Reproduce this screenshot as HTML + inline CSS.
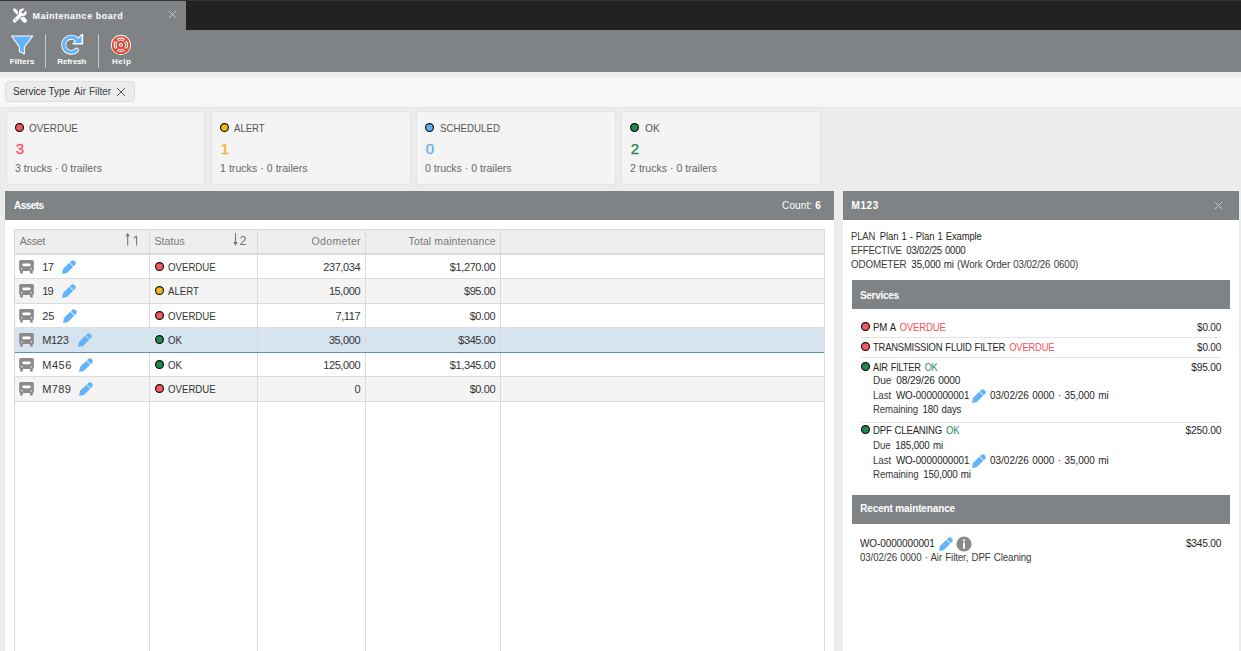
<!DOCTYPE html>
<html><head><meta charset="utf-8">
<style>
*{box-sizing:border-box;margin:0;padding:0}
html,body{width:1241px;height:651px;overflow:hidden;background:#ececec;font-family:"Liberation Sans",sans-serif;color:#333;position:relative}
.b{position:absolute}
.t{position:absolute;line-height:0;white-space:nowrap}
.v{color:#1e1e1e;margin-left:1.5px}
.dot{position:absolute;width:9px;height:9px;border-radius:50%;border:1.3px solid #151515;box-shadow:0 0 0 1px rgba(255,255,255,.9)}
.red{background:#f55a5f}.yel{background:#f7b90f}.blu{background:#5eaef5}.grn{background:#1e8a52}
</style></head><body>
<svg width="0" height="0" style="position:absolute">
<defs>
<symbol id="truck" viewBox="0 0 15 15">
<rect x="0.15" y="0.9" width="14.7" height="11.2" rx="1.6" fill="#8a8a8a"/>
<rect x="3.5" y="4.4" width="8" height="2.8" rx="0.9" fill="#fff"/>
<circle cx="2.8" cy="9.8" r="1" fill="#c4c4c4"/><circle cx="12.2" cy="9.8" r="1" fill="#c4c4c4"/>
<rect x="1.1" y="11.5" width="2.7" height="3" fill="#8a8a8a"/><rect x="11" y="11.5" width="2.7" height="3" fill="#8a8a8a"/>
</symbol>
<symbol id="pen" viewBox="0 0 15 15">
<g transform="translate(0.1 14.9) rotate(-45)" fill="#62b3fb">
<path d="M0 0 L4 -2.8 L12.9 -2.8 L12.9 2.8 L4 2.8 Z"/>
<path d="M13.7 -2.8 L15.2 -2.8 A2.8 2.8 0 0 1 15.2 2.8 L13.7 2.8 Z"/>
</g>
</symbol>
</defs></svg>
<div class="b" style="left:0px;top:0px;width:1241px;height:30px;background:#222;"></div>
<div class="b" style="left:0px;top:0px;width:1241px;height:1px;background:#333;"></div>
<div class="b" style="left:0px;top:1px;width:186px;height:29px;background:#808386;"></div>
<svg class="b" style="left:10px;top:5px" width="20" height="20" viewBox="0 0 20 20">
<g transform="translate(10 10) scale(0.9) translate(-10.2 -10)">
<g stroke="#fff" stroke-linecap="round" fill="none">
<path d="M4.2 4.4 L10 10.4" stroke-width="3.4"/>
<path d="M11 11.6 L15.6 16.4" stroke-width="4.6"/>
</g>
<path d="M4.3 16.4 L11.3 9.2" stroke="#808386" stroke-width="5.6" stroke-linecap="round"/>
<circle cx="13.3" cy="6.9" r="5" fill="#808386"/>
<path d="M4.3 16.4 L11.3 9.2" stroke="#fff" stroke-width="4.1" stroke-linecap="round"/>
<circle cx="13.3" cy="6.9" r="4.2" fill="#fff"/>
<path d="M13.3 6.9 L17.9 2.3" stroke="#808386" stroke-width="2.6" stroke-linecap="butt"/>
<circle cx="13.3" cy="6.9" r="1.3" fill="#808386"/>
<circle cx="5.6" cy="15.2" r="0.7" fill="#808386"/>
</g>
</svg>
<div id="t1" class="t" style="top:15.58px;font-size:9px;color:#fff;font-weight:bold;letter-spacing:0.512px;left:32.5px;">Maintenance board</div>
<svg class="b" style="left:168px;top:10px" width="9" height="9" viewBox="0 0 9 9"><path d="M1 1L8 8M8 1L1 8" stroke="#c4c6c8" stroke-width="1"/></svg>
<div class="b" style="left:0px;top:30px;width:1241px;height:42px;background:#808386;"></div>
<svg class="b" style="left:0;top:30px" width="140" height="42" viewBox="0 30 140 42">
<path d="M11.6 36 L32.8 36 L24.4 47 L24.4 54 L19.4 51.4 L19.4 47 Z" fill="#62b3fb" stroke="#fff" stroke-width="1.1" stroke-linejoin="round"/>
<path d="M76.6 39.4 A7.6 7.6 0 1 0 76.6 50.2" fill="none" stroke="#fff" stroke-width="5" stroke-linecap="round"/>
<path d="M73.4 43.6 L82.2 43.6 L82.2 34.8 Z" fill="#fff" stroke="#fff" stroke-width="2" stroke-linejoin="round"/>
<path d="M76.6 39.4 A7.6 7.6 0 1 0 76.6 50.2" fill="none" stroke="#62b3fb" stroke-width="3.3" stroke-linecap="round"/>
<path d="M74.2 43 L81.6 43 L81.6 35.6 Z" fill="#62b3fb"/>
<circle cx="120.9" cy="44.9" r="10.1" fill="#fff"/>
<circle cx="120.9" cy="44.9" r="9.2" fill="#e6432d"/>
<path d="M117.63 40.23 A5.7 5.7 0 0 1 124.17 40.23 M125.57 41.63 A5.7 5.7 0 0 1 125.57 48.17 M124.17 49.57 A5.7 5.7 0 0 1 117.63 49.57 M116.23 48.17 A5.7 5.7 0 0 1 116.23 41.63" fill="none" stroke="#fff" stroke-width="2.9"/>
<path d="M118.05 39.96 A5.7 5.7 0 0 1 123.75 39.96 M125.84 42.05 A5.7 5.7 0 0 1 125.84 47.75 M123.75 49.84 A5.7 5.7 0 0 1 118.05 49.84 M115.96 47.75 A5.7 5.7 0 0 1 115.96 42.05" fill="none" stroke="#8f9194" stroke-width="1.4"/>
<circle cx="120.9" cy="44.9" r="1.6" fill="#8f9194" stroke="#fff" stroke-width="1"/>
</svg>
<div id="t2" class="t" style="top:62.23px;font-size:8px;color:#fff;font-weight:bold;letter-spacing:0.077px;left:-27.861px;width:100px;text-align:center;">Filters</div>
<div class="b" style="left:45px;top:34px;width:1px;height:34px;background:#c8c9ca;"></div>
<div id="t3" class="t" style="top:62.23px;font-size:8px;color:#fff;font-weight:bold;letter-spacing:-0.094px;left:21.853px;width:100px;text-align:center;">Refresh</div>
<div class="b" style="left:98px;top:34px;width:1px;height:34px;background:#c8c9ca;"></div>
<div id="t4" class="t" style="top:62.23px;font-size:8px;color:#fff;font-weight:bold;letter-spacing:0.539px;left:71.669px;width:100px;text-align:center;">Help</div>
<div class="b" style="left:0px;top:72px;width:1241px;height:5px;background:#ececec;"></div>
<div class="b" style="left:0px;top:77px;width:1241px;height:30px;background:#f6f7f9;"></div>
<div class="b" style="left:0px;top:107px;width:1241px;height:1px;background:#e4e5e7;"></div>
<div class="b" style="left:5px;top:81px;width:130px;height:21px;background:#ececec;border:1px solid #dedede;border-radius:4px"></div>
<div id="t5" class="t" style="top:91.53px;font-size:10px;color:#333;letter-spacing:-0.053px;left:13.1px;">Service Type</div>
<div id="t6" class="t" style="top:91.53px;font-size:10px;color:#444;letter-spacing:0.003px;left:73.9px;">Air Filter</div>
<svg class="b" style="left:115.5px;top:86.5px" width="10" height="10" viewBox="0 0 10 10"><path d="M1 1L9 9M9 1L1 9" stroke="#555" stroke-width="1"/></svg>
<div class="b" style="left:6px;top:111px;width:199px;height:74px;background:#f4f4f4;border:1px solid #e4e4e8;border-radius:4px"></div>
<svg class="b" style="left:14px;top:122px" width="11" height="11" viewBox="0 0 11 11"><circle cx="5.5" cy="5.5" r="5.1" fill="rgba(255,255,255,.9)"/><circle cx="5.5" cy="5.5" r="3.95" fill="#f55a5f" stroke="#111" stroke-width="1.2"/></svg>
<div id="t7" class="t" style="top:128.19px;font-size:11px;color:#555;transform:scaleX(0.8980);transform-origin:0 3.81px;left:29.3px;">OVERDUE</div>
<div id="t8" class="t" style="top:148.80px;font-size:15px;color:#f2555c;left:15.8px;-webkit-text-stroke:0.35px #f2555c">3</div>
<div id="t9" class="t" style="top:168.16px;font-size:10.5px;color:#666;letter-spacing:0.029px;left:15.0px;">3 trucks · 0 trailers</div>
<div class="b" style="left:211px;top:111px;width:200px;height:74px;background:#f4f4f4;border:1px solid #e4e4e8;border-radius:4px"></div>
<svg class="b" style="left:219px;top:122px" width="11" height="11" viewBox="0 0 11 11"><circle cx="5.5" cy="5.5" r="5.1" fill="rgba(255,255,255,.9)"/><circle cx="5.5" cy="5.5" r="3.95" fill="#f7b90f" stroke="#111" stroke-width="1.2"/></svg>
<div id="t10" class="t" style="top:128.19px;font-size:11px;color:#555;transform:scaleX(0.8710);transform-origin:0 3.81px;left:234.1px;">ALERT</div>
<div id="t11" class="t" style="top:148.80px;font-size:15px;color:#f5b21e;left:220.8px;-webkit-text-stroke:0.35px #f5b21e">1</div>
<div id="t12" class="t" style="top:168.16px;font-size:10.5px;color:#666;letter-spacing:0.060px;left:220.0px;">1 trucks · 0 trailers</div>
<div class="b" style="left:416px;top:111px;width:200px;height:74px;background:#f4f4f4;border:1px solid #e4e4e8;border-radius:4px"></div>
<svg class="b" style="left:424px;top:122px" width="11" height="11" viewBox="0 0 11 11"><circle cx="5.5" cy="5.5" r="5.1" fill="rgba(255,255,255,.9)"/><circle cx="5.5" cy="5.5" r="3.95" fill="#5eaef5" stroke="#111" stroke-width="1.2"/></svg>
<div id="t13" class="t" style="top:128.19px;font-size:11px;color:#555;transform:scaleX(0.8830);transform-origin:0 3.81px;left:440.1px;">SCHEDULED</div>
<div id="t14" class="t" style="top:148.80px;font-size:15px;color:#5eaef5;left:425.8px;-webkit-text-stroke:0.35px #5eaef5">0</div>
<div id="t15" class="t" style="top:168.16px;font-size:10.5px;color:#666;letter-spacing:0.012px;left:425.0px;">0 trucks · 0 trailers</div>
<div class="b" style="left:621px;top:111px;width:200px;height:74px;background:#f4f4f4;border:1px solid #e4e4e8;border-radius:4px"></div>
<svg class="b" style="left:629px;top:122px" width="11" height="11" viewBox="0 0 11 11"><circle cx="5.5" cy="5.5" r="5.1" fill="rgba(255,255,255,.9)"/><circle cx="5.5" cy="5.5" r="3.95" fill="#1e8a52" stroke="#111" stroke-width="1.2"/></svg>
<div id="t16" class="t" style="top:128.19px;font-size:11px;color:#555;transform:scaleX(0.9320);transform-origin:0 3.81px;left:644.6px;">OK</div>
<div id="t17" class="t" style="top:148.80px;font-size:15px;color:#1e8a52;left:630.8px;-webkit-text-stroke:0.35px #1e8a52">2</div>
<div id="t18" class="t" style="top:168.16px;font-size:10.5px;color:#666;letter-spacing:0.024px;left:630.1px;">2 trucks · 0 trailers</div>
<div class="b" style="left:5px;top:191px;width:829px;height:29px;background:#808386;"></div>
<div class="b" style="left:5px;top:220px;width:829px;height:431px;background:#fff;"></div>
<div id="t19" class="t" style="top:205.53px;font-size:10px;color:#fff;font-weight:bold;letter-spacing:-0.547px;left:14px;">Assets</div>
<div id="t20" class="t" style="top:205.53px;font-size:10px;color:#fff;letter-spacing:0.113px;right:420.187px;">Count: <b>6</b></div>
<div class="b" style="left:14px;top:229px;width:811px;height:422px;background:#fff;border:1px solid #dadada;border-bottom:none"></div>
<div class="b" style="left:15px;top:230px;width:809px;height:23px;background:#eeeeee;"></div>
<div class="b" style="left:15px;top:253px;width:809px;height:2px;background:#dadada;"></div>
<div class="b" style="left:15px;top:255px;width:809px;height:23px;background:#fff;"></div>
<div class="b" style="left:15px;top:278px;width:809px;height:1px;background:#dcdcdc;"></div>
<div class="b" style="left:15px;top:279px;width:809px;height:24px;background:#f4f4f4;"></div>
<div class="b" style="left:15px;top:303px;width:809px;height:1px;background:#dcdcdc;"></div>
<div class="b" style="left:15px;top:304px;width:809px;height:23px;background:#fff;"></div>
<div class="b" style="left:15px;top:327px;width:809px;height:1px;background:#dcdcdc;"></div>
<div class="b" style="left:15px;top:328px;width:809px;height:24px;background:#d6e4f0;"></div>
<div class="b" style="left:15px;top:352px;width:809px;height:1px;background:#5b8fc5;"></div>
<div class="b" style="left:15px;top:353px;width:809px;height:23px;background:#fff;"></div>
<div class="b" style="left:15px;top:376px;width:809px;height:1px;background:#dcdcdc;"></div>
<div class="b" style="left:15px;top:377px;width:809px;height:24px;background:#f4f4f4;"></div>
<div class="b" style="left:15px;top:401px;width:809px;height:1px;background:#dcdcdc;"></div>
<svg class="b" style="left:19px;top:259px" width="15" height="15"><use href="#truck"/></svg>
<div id="asset0" class="t" style="top:267.19px;font-size:11px;color:#333;letter-spacing:-0.660px;left:42.2px;">17</div>
<svg class="b" style="left:62px;top:259px" width="15" height="15"><use href="#pen"/></svg>
<svg class="b" style="left:154px;top:261px" width="11" height="11" viewBox="0 0 11 11"><circle cx="5.5" cy="5.5" r="5.1" fill="rgba(255,255,255,.9)"/><circle cx="5.5" cy="5.5" r="3.95" fill="#f55a5f" stroke="#111" stroke-width="1.2"/></svg>
<div id="st0" class="t" style="top:267.19px;font-size:11px;color:#333;transform:scaleX(0.8780);transform-origin:0 3.81px;left:168.2px;">OVERDUE</div>
<div id="od0" class="t" style="top:267.19px;font-size:11px;color:#333;letter-spacing:-0.388px;right:880.788px;">237,034</div>
<div id="tm0" class="t" style="top:267.19px;font-size:11px;color:#333;letter-spacing:-0.391px;right:745.791px;">$1,270.00</div>
<svg class="b" style="left:19px;top:283px" width="15" height="15"><use href="#truck"/></svg>
<div id="asset1" class="t" style="top:291.19px;font-size:11px;color:#333;letter-spacing:-0.764px;left:42.2px;">19</div>
<svg class="b" style="left:62px;top:283px" width="15" height="15"><use href="#pen"/></svg>
<svg class="b" style="left:154px;top:285px" width="11" height="11" viewBox="0 0 11 11"><circle cx="5.5" cy="5.5" r="5.1" fill="rgba(255,255,255,.9)"/><circle cx="5.5" cy="5.5" r="3.95" fill="#f7b90f" stroke="#111" stroke-width="1.2"/></svg>
<div id="t26" class="t" style="top:291.19px;font-size:11px;color:#333;transform:scaleX(0.8780);transform-origin:0 3.81px;left:168.2px;">ALERT</div>
<div id="t27" class="t" style="top:291.19px;font-size:11px;color:#333;letter-spacing:-0.388px;right:880.788px;">15,000</div>
<div id="t28" class="t" style="top:291.19px;font-size:11px;color:#333;letter-spacing:-0.391px;right:745.791px;">$95.00</div>
<svg class="b" style="left:19px;top:308px" width="15" height="15"><use href="#truck"/></svg>
<div id="asset2" class="t" style="top:316.19px;font-size:11px;color:#333;letter-spacing:0.069px;left:42.2px;">25</div>
<svg class="b" style="left:63px;top:308px" width="15" height="15"><use href="#pen"/></svg>
<svg class="b" style="left:154px;top:310px" width="11" height="11" viewBox="0 0 11 11"><circle cx="5.5" cy="5.5" r="5.1" fill="rgba(255,255,255,.9)"/><circle cx="5.5" cy="5.5" r="3.95" fill="#f55a5f" stroke="#111" stroke-width="1.2"/></svg>
<div id="t30" class="t" style="top:316.19px;font-size:11px;color:#333;transform:scaleX(0.8780);transform-origin:0 3.81px;left:168.2px;">OVERDUE</div>
<div id="t31" class="t" style="top:316.19px;font-size:11px;color:#333;letter-spacing:-0.388px;right:880.788px;">7,117</div>
<div id="t32" class="t" style="top:316.19px;font-size:11px;color:#333;letter-spacing:-0.391px;right:745.791px;">$0.00</div>
<svg class="b" style="left:19px;top:332px" width="15" height="15"><use href="#truck"/></svg>
<div id="asset3" class="t" style="top:340.19px;font-size:11px;color:#333;letter-spacing:-0.310px;left:42.2px;">M123</div>
<svg class="b" style="left:78px;top:332px" width="15" height="15"><use href="#pen"/></svg>
<svg class="b" style="left:154px;top:334px" width="11" height="11" viewBox="0 0 11 11"><circle cx="5.5" cy="5.5" r="5.1" fill="rgba(255,255,255,.9)"/><circle cx="5.5" cy="5.5" r="3.95" fill="#1e8a52" stroke="#111" stroke-width="1.2"/></svg>
<div id="t34" class="t" style="top:340.19px;font-size:11px;color:#333;transform:scaleX(0.8780);transform-origin:0 3.81px;left:168.2px;">OK</div>
<div id="t35" class="t" style="top:340.19px;font-size:11px;color:#333;letter-spacing:-0.388px;right:880.788px;">35,000</div>
<div id="t36" class="t" style="top:340.19px;font-size:11px;color:#333;letter-spacing:-0.391px;right:745.791px;">$345.00</div>
<svg class="b" style="left:19px;top:357px" width="15" height="15"><use href="#truck"/></svg>
<div id="asset4" class="t" style="top:365.19px;font-size:11px;color:#333;letter-spacing:0.530px;left:42.2px;">M456</div>
<svg class="b" style="left:79px;top:357px" width="15" height="15"><use href="#pen"/></svg>
<svg class="b" style="left:154px;top:359px" width="11" height="11" viewBox="0 0 11 11"><circle cx="5.5" cy="5.5" r="5.1" fill="rgba(255,255,255,.9)"/><circle cx="5.5" cy="5.5" r="3.95" fill="#1e8a52" stroke="#111" stroke-width="1.2"/></svg>
<div id="t38" class="t" style="top:365.19px;font-size:11px;color:#333;transform:scaleX(0.8780);transform-origin:0 3.81px;left:168.2px;">OK</div>
<div id="t39" class="t" style="top:365.19px;font-size:11px;color:#333;letter-spacing:-0.388px;right:880.788px;">125,000</div>
<div id="t40" class="t" style="top:365.19px;font-size:11px;color:#333;letter-spacing:-0.391px;right:745.791px;">$1,345.00</div>
<svg class="b" style="left:19px;top:381px" width="15" height="15"><use href="#truck"/></svg>
<div id="asset5" class="t" style="top:389.19px;font-size:11px;color:#333;letter-spacing:0.362px;left:42.2px;">M789</div>
<svg class="b" style="left:79px;top:381px" width="15" height="15"><use href="#pen"/></svg>
<svg class="b" style="left:154px;top:383px" width="11" height="11" viewBox="0 0 11 11"><circle cx="5.5" cy="5.5" r="5.1" fill="rgba(255,255,255,.9)"/><circle cx="5.5" cy="5.5" r="3.95" fill="#f55a5f" stroke="#111" stroke-width="1.2"/></svg>
<div id="t42" class="t" style="top:389.19px;font-size:11px;color:#333;transform:scaleX(0.8780);transform-origin:0 3.81px;left:168.2px;">OVERDUE</div>
<div id="t43" class="t" style="top:389.19px;font-size:11px;color:#333;letter-spacing:-0.388px;right:880.788px;">0</div>
<div id="t44" class="t" style="top:389.19px;font-size:11px;color:#333;letter-spacing:-0.391px;right:745.791px;">$0.00</div>
<div class="b" style="left:149px;top:230px;width:1px;height:421px;background:#dadada;"></div>
<div class="b" style="left:257px;top:230px;width:1px;height:421px;background:#dadada;"></div>
<div class="b" style="left:365px;top:230px;width:1px;height:421px;background:#dadada;"></div>
<div class="b" style="left:500px;top:230px;width:1px;height:421px;background:#dadada;"></div>
<div class="b" style="left:15px;top:352px;width:809px;height:1px;background:#5b8fc5;"></div>
<div id="t45" class="t" style="top:241.36px;font-size:10.5px;color:#777;letter-spacing:-0.111px;left:19.7px;">Asset</div>
<div id="t46" class="t" style="top:241.36px;font-size:10.5px;color:#777;letter-spacing:0.099px;left:154.4px;">Status</div>
<div id="t47" class="t" style="top:241.36px;font-size:10.5px;color:#777;letter-spacing:0.335px;right:880.065px;">Odometer</div>
<div id="t48" class="t" style="top:241.36px;font-size:10.5px;color:#777;letter-spacing:0.113px;right:745.287px;">Total maintenance</div>
<svg class="b" style="left:120px;top:230px" width="22" height="18" viewBox="120 230 22 18"><path d="M127.7 236V245.7" stroke="#777" stroke-width="1.1" fill="none"/><path d="M125.4 236.6L127.7 232.8L130 236.6Z" fill="#777"/><path d="M136.6 235.9V245.5M133.6 238.2L136.6 235.9" stroke="#777" stroke-width="1.1" fill="none"/></svg>
<svg class="b" style="left:228px;top:230px" width="14" height="18" viewBox="228 230 14 18"><path d="M235.5 233V242.5" stroke="#777" stroke-width="1.1" fill="none"/><path d="M233.2 242L235.5 245.8L237.8 242Z" fill="#777"/></svg>
<div id="t49" class="t" style="top:240.67px;font-size:12.5px;color:#777;left:239.6px;">2</div>
<div class="b" style="left:843px;top:191px;width:396px;height:29px;background:#808386;"></div>
<div class="b" style="left:843px;top:220px;width:396px;height:431px;background:#fff;"></div>
<div id="t50" class="t" style="top:205.73px;font-size:10px;color:#fff;font-weight:bold;letter-spacing:0.665px;left:851.4px;">M123</div>
<svg class="b" style="left:1214px;top:201px" width="9" height="9" viewBox="0 0 9 9"><path d="M1 1L8 8M8 1L1 8" stroke="#c6c8ca" stroke-width="0.95"/></svg>
<div id="t51" class="t" style="top:236.57px;font-size:9.6px;color:#3a3a3a;letter-spacing:-0.100px;word-spacing:0.6px;transform:scaleX(0.9830) scaleY(1.1);transform-origin:0 3.33px;left:851.4px;">PLAN <span class="v">Plan 1 - Plan 1 Example</span></div>
<div id="t52" class="t" style="top:251.47px;font-size:9.6px;color:#3a3a3a;letter-spacing:-0.200px;word-spacing:0.6px;transform:scaleX(0.9960) scaleY(1.1);transform-origin:0 3.33px;left:851.4px;">EFFECTIVE <span class="v">03/02/25 0000</span></div>
<div id="t53" class="t" style="top:265.27px;font-size:9.6px;color:#3a3a3a;letter-spacing:-0.100px;word-spacing:0.6px;transform:scaleX(1.0170) scaleY(1.1);transform-origin:0 3.33px;left:851.4px;">ODOMETER <span class="v">35,000 mi</span> (Work Order 03/02/26 0600)</div>
<div class="b" style="left:852px;top:280px;width:378px;height:29px;background:#808386;"></div>
<div id="t54" class="t" style="top:295.54px;font-size:10px;color:#fff;font-weight:bold;letter-spacing:-0.309px;left:860.0px;">Services</div>
<svg class="b" style="left:860px;top:320.5px" width="11" height="11" viewBox="0 0 11 11"><circle cx="5.5" cy="5.5" r="5.1" fill="rgba(255,255,255,.9)"/><circle cx="5.5" cy="5.5" r="3.95" fill="#f55a5f" stroke="#111" stroke-width="1.2"/></svg>
<div id="t55" class="t" style="top:327.67px;font-size:9.6px;color:#262626;letter-spacing:-0.200px;word-spacing:0.6px;transform:scaleX(1.0070) scaleY(1.1);transform-origin:0 3.33px;left:873.0px;">PM A <span style="color:#f0545c;margin-left:1px">OVERDUE</span></div>
<div id="price0" class="t" style="top:327.67px;font-size:9.6px;color:#262626;letter-spacing:-0.200px;word-spacing:0.6px;transform:scaleX(1.0390) scaleY(1.1);transform-origin:100% 3.33px;right:20.200px;">$0.00</div>
<svg class="b" style="left:860px;top:340.5px" width="11" height="11" viewBox="0 0 11 11"><circle cx="5.5" cy="5.5" r="5.1" fill="rgba(255,255,255,.9)"/><circle cx="5.5" cy="5.5" r="3.95" fill="#f55a5f" stroke="#111" stroke-width="1.2"/></svg>
<div id="t57" class="t" style="top:347.67px;font-size:9.6px;color:#262626;letter-spacing:-0.200px;word-spacing:0.6px;transform:scaleX(0.9820) scaleY(1.1);transform-origin:0 3.33px;left:873.0px;">TRANSMISSION FLUID FILTER <span style="color:#f0545c;margin-left:1px">OVERDUE</span></div>
<div id="price0" class="t" style="top:347.67px;font-size:9.6px;color:#262626;letter-spacing:-0.200px;word-spacing:0.6px;transform:scaleX(1.0390) scaleY(1.1);transform-origin:100% 3.33px;right:20.200px;">$0.00</div>
<svg class="b" style="left:860px;top:360.5px" width="11" height="11" viewBox="0 0 11 11"><circle cx="5.5" cy="5.5" r="5.1" fill="rgba(255,255,255,.9)"/><circle cx="5.5" cy="5.5" r="3.95" fill="#1e8a52" stroke="#111" stroke-width="1.2"/></svg>
<div id="t59" class="t" style="top:367.67px;font-size:9.6px;color:#262626;letter-spacing:-0.200px;word-spacing:0.6px;transform:scaleX(0.9620) scaleY(1.1);transform-origin:0 3.33px;left:873.0px;">AIR FILTER <span style="color:#1e9060;margin-left:1px">OK</span></div>
<div id="price95" class="t" style="top:367.67px;font-size:9.6px;color:#262626;letter-spacing:-0.200px;word-spacing:0.6px;transform:scaleX(1.0630) scaleY(1.1);transform-origin:100% 3.33px;right:20.200px;">$95.00</div>
<div id="t61" class="t" style="top:380.67px;font-size:9.6px;color:#3a3a3a;letter-spacing:-0.100px;word-spacing:0.6px;transform:scaleX(1.0570) scaleY(1.1);transform-origin:0 3.33px;left:873.0px;">Due <span class="v">08/29/26 0000</span></div>
<div id="last0" class="t" style="top:395.57px;font-size:9.6px;color:#3a3a3a;letter-spacing:-0.100px;word-spacing:0.6px;transform:scaleX(1.0220) scaleY(1.1);transform-origin:0 3.33px;left:873.0px;">Last <span class="v">WO-0000000001</span></div>
<svg class="b" style="left:972px;top:387.9px" width="15" height="15"><use href="#pen"/></svg>
<div id="lastd0" class="t" style="top:395.57px;font-size:9.6px;color:#262626;word-spacing:0.6px;transform:scaleX(1.0380) scaleY(1.1);transform-origin:0 3.33px;left:989.5px;">03/02/26 0000 · 35,000 mi</div>
<div id="t64" class="t" style="top:410.27px;font-size:9.6px;color:#3a3a3a;letter-spacing:-0.100px;word-spacing:0.6px;transform:scaleX(0.9990) scaleY(1.1);transform-origin:0 3.33px;left:873.0px;">Remaining <span class="v">180 days</span></div>
<svg class="b" style="left:860px;top:424.1px" width="11" height="11" viewBox="0 0 11 11"><circle cx="5.5" cy="5.5" r="5.1" fill="rgba(255,255,255,.9)"/><circle cx="5.5" cy="5.5" r="3.95" fill="#1e8a52" stroke="#111" stroke-width="1.2"/></svg>
<div id="t65" class="t" style="top:431.27px;font-size:9.6px;color:#262626;letter-spacing:-0.200px;word-spacing:0.6px;transform:scaleX(0.9980) scaleY(1.1);transform-origin:0 3.33px;left:873.0px;">DPF CLEANING <span style="color:#1e9060;margin-left:1px">OK</span></div>
<div id="price25" class="t" style="top:431.27px;font-size:9.6px;color:#262626;letter-spacing:-0.200px;word-spacing:0.6px;transform:scaleX(1.0720) scaleY(1.1);transform-origin:100% 3.33px;right:20.200px;">$250.00</div>
<div id="t67" class="t" style="top:445.57px;font-size:9.6px;color:#3a3a3a;letter-spacing:-0.100px;word-spacing:0.6px;transform:scaleX(1.0130) scaleY(1.1);transform-origin:0 3.33px;left:873.0px;">Due <span class="v">185,000 mi</span></div>
<div id="t68" class="t" style="top:460.67px;font-size:9.6px;color:#3a3a3a;letter-spacing:-0.100px;word-spacing:0.6px;transform:scaleX(1.0220) scaleY(1.1);transform-origin:0 3.33px;left:873.0px;">Last <span class="v">WO-0000000001</span></div>
<svg class="b" style="left:972px;top:453.0px" width="15" height="15"><use href="#pen"/></svg>
<div id="t69" class="t" style="top:460.67px;font-size:9.6px;color:#262626;word-spacing:0.6px;transform:scaleX(1.0380) scaleY(1.1);transform-origin:0 3.33px;left:989.5px;">03/02/26 0000 · 35,000 mi</div>
<div id="t70" class="t" style="top:475.37px;font-size:9.6px;color:#3a3a3a;letter-spacing:-0.100px;word-spacing:0.6px;transform:scaleX(1.0120) scaleY(1.1);transform-origin:0 3.33px;left:873.0px;">Remaining <span class="v">150,000 mi</span></div>
<div class="b" style="left:861px;top:337px;width:360px;height:1px;background:#e4e4e4;"></div>
<div class="b" style="left:861px;top:357px;width:360px;height:1px;background:#e4e4e4;"></div>
<div class="b" style="left:861px;top:422px;width:360px;height:1px;background:#e4e4e4;"></div>
<div class="b" style="left:852px;top:495px;width:378px;height:29px;background:#808386;"></div>
<div id="t71" class="t" style="top:509.14px;font-size:10px;color:#fff;font-weight:bold;letter-spacing:-0.135px;left:860.2px;">Recent maintenance</div>
<div id="t72" class="t" style="top:543.87px;font-size:9.6px;color:#262626;letter-spacing:-0.100px;word-spacing:0.6px;transform:scaleX(1.0420) scaleY(1.1);transform-origin:0 3.33px;left:860.2px;">WO-0000000001</div>
<svg class="b" style="left:938.5px;top:536px" width="15" height="15"><use href="#pen"/></svg>
<svg class="b" style="left:955.5px;top:535.5px" width="16" height="16" viewBox="0 0 16 16"><circle cx="8" cy="8" r="7.5" fill="#8a8a8a"/><rect x="7" y="6.6" width="2" height="6" fill="#fff"/><circle cx="8" cy="4.4" r="1.1" fill="#fff"/></svg>
<div id="t73" class="t" style="top:543.87px;font-size:9.6px;color:#262626;letter-spacing:-0.200px;word-spacing:0.6px;transform:scaleX(1.0630) scaleY(1.1);transform-origin:100% 3.33px;right:20.200px;">$345.00</div>
<div id="t74" class="t" style="top:557.87px;font-size:9.6px;color:#3a3a3a;letter-spacing:-0.100px;word-spacing:0.6px;transform:scaleX(1.0130) scaleY(1.1);transform-origin:0 3.33px;left:860.4px;">03/02/26 0000 · Air Filter, DPF Cleaning</div>
</body></html>
